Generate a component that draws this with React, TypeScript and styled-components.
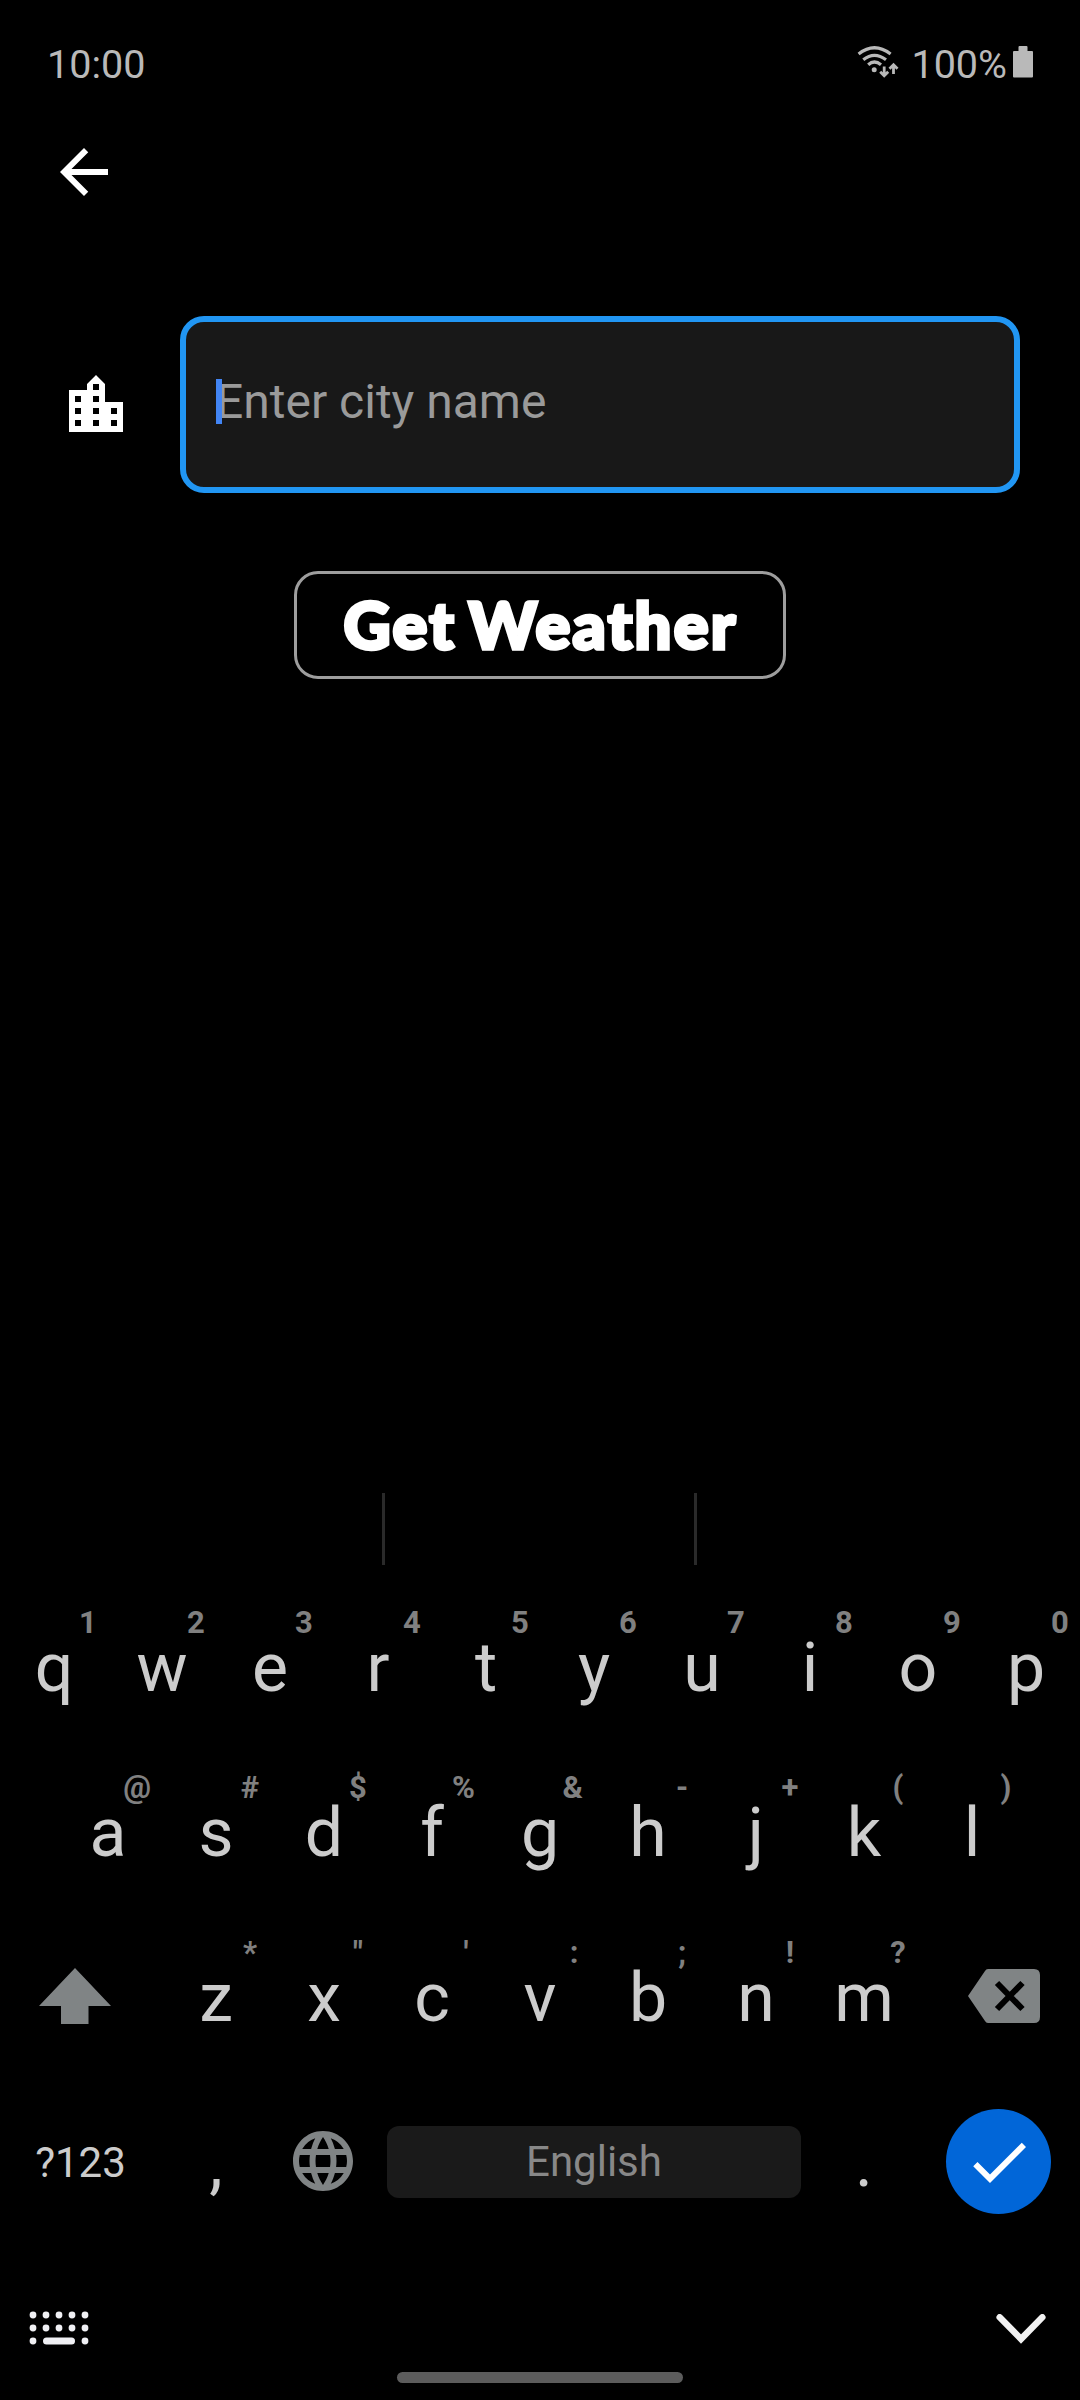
import React from "react";
import styled, { createGlobalStyle } from "styled-components";
import { MdArrowBack, MdCheck, MdLanguage, MdLocationCity } from "react-icons/md";

const GlobalStyle = createGlobalStyle`
  * { box-sizing: border-box; }
  body { margin: 0; background: #000; font-family: Roboto, "Liberation Sans", sans-serif; }
  svg { display: block; flex: none; }
`;

const Screen = styled.main`
  width: 1080px;
  height: 2400px;
  display: flex;
  flex-direction: column;
  background: #000;
  overflow: hidden;
`;

const StatusBar = styled.header`
  height: 128px;
  flex: none;
  display: flex;
  justify-content: space-between;
  padding: 41px 47px 0 47px;
  font-size: 39.5px;
  line-height: 48px;
  color: #b9b9b9;
`;

const StatusGroup = styled.div`
  display: flex;
  height: 48px;
`;

const WifiSlot = styled.span`
  padding: 3px 12px 0 0;
`;

const BatterySlot = styled.span`
  padding: 5px 0 0 6px;
`;

const AppBar = styled.nav`
  height: 188px;
  flex: none;
  padding: 8px 48px;
  color: #fff;
`;

const FieldRow = styled.section`
  display: flex;
  align-items: center;
  gap: 48px;
  flex: none;
  height: 177px;
  padding: 0 60px;
  color: #fff;
`;

const CityField = styled.div`
  position: relative;
  flex: 1;
  height: 177px;
  border: 6px solid #2196f3;
  border-radius: 24px;
  background: #181818;
  padding: 51px 30px 0;
  font-size: 48px;
  line-height: 58px;
  color: #9a9a9a;
`;

const Caret = styled.i`
  position: absolute;
  left: 30px;
  top: 57px;
  width: 6px;
  height: 45px;
  background: #4285f4;
`;

const Actions = styled.section`
  flex: 1;
  display: flex;
  justify-content: center;
  align-items: flex-start;
  padding-top: 78px;
`;

const WeatherButton = styled.button`
  width: 492px;
  height: 108px;
  padding: 0 0 2px 1px;
  border: 3px solid #9e9e9e;
  border-radius: 24px;
  background: #000;
  color: #fff;
  font-family: Lato, "Liberation Sans", sans-serif;
  font-size: 65px;
  font-weight: 900;
  line-height: 96px;
  letter-spacing: 2.3px;
  word-spacing: -5px;
  white-space: nowrap;
  -webkit-text-stroke: 3.5px #fff;
`;

const Keyboard = styled.section`
  flex: none;
  height: 770px;
  display: flex;
  flex-direction: column;
`;

const Suggestions = styled.div`
  flex: none;
  height: 110px;
  display: grid;
  grid-template-columns: 385px 312px 1fr;
  padding: 19px 0;
`;

const Suggestion = styled.div<{ $divided?: boolean }>`
  border-right: ${(p) => (p.$divided ? "3px solid #2a2a2a" : "none")};
`;

const KeyRow = styled.div`
  flex: none;
  height: 165px;
  display: flex;
  justify-content: center;
`;

const Key = styled.button<{ $width?: number }>`
  position: relative;
  width: ${(p) => p.$width ?? 108}px;
  height: 165px;
  padding: 0;
  border: 0;
  background: none;
  display: flex;
  align-items: center;
  justify-content: center;
  font-family: inherit;
  color: #cccccc;
`;

const Letter = styled.span`
  font-size: 68px;
  line-height: 80px;
  padding-top: 3px;
`;

const Hint = styled.span`
  position: absolute;
  right: 11px;
  top: 21px;
  min-width: 18px;
  text-align: center;
  font-size: 31px;
  line-height: 36px;
  font-weight: 700;
  color: #808080;
`;

const ModeLabel = styled.span`
  font-size: 42px;
  line-height: 50px;
  padding: 3px 1px 0 0;
`;

const IconKey = styled(Key)<{ $nudge?: number }>`
  padding: 0 ${(p) => p.$nudge ?? 0}px 1px 0;
  color: #808485;
`;

const SpaceKey = styled.button`
  width: 414px;
  height: 72px;
  margin: 47px 9px 0;
  padding: 0 0 1px;
  border: 0;
  border-radius: 12px;
  background: #1a1a1a;
  color: #888888;
  font: 42px/50px Roboto, "Liberation Sans", sans-serif;
`;

const DoneKey = styled.button`
  width: 105px;
  height: 105px;
  margin: 30px 29px 0 28px;
  padding: 0;
  border: 0;
  border-radius: 50%;
  background: #0166d8;
  color: #fff;
  display: flex;
  align-items: center;
  justify-content: center;
`;

const NavBar = styled.footer`
  flex: none;
  height: 156px;
  display: grid;
  grid-template-columns: 368px 286px 1fr;
  align-items: start;
  padding: 67px 34px 0 29px;
`;

const ChevronSlot = styled.span`
  justify-self: end;
  padding-top: 3px;
`;

const HomePill = styled.span`
  height: 11px;
  margin-top: 61px;
  border-radius: 6px;
  background: #5c5c5c;
`;

const WifiIcon = () => (
  <svg width="42" height="34" viewBox="0 0 42 34" fill="none" stroke="#b9b9b9">
    <path d="M1.600 10Q17.300-2.500 33.600 10" strokeWidth="3.200" />
    <path d="M6.300 15.800Q17.300 7 29 15.800" strokeWidth="3.200" />
    <path d="M11.200 20.800Q17.300 15.200 24 20.800" strokeWidth="3.200" />
    <circle cx="17.200" cy="25.700" r="2.500" fill="#b9b9b9" stroke="none" />
    <path
      d="M27.200 22.500v9M23.200 27.800l4 4 4-4M36.500 30v-9M32.500 24.700l4-4 4 4"
      strokeWidth="2.800"
    />
  </svg>
);

const BatteryIcon = () => (
  <svg width="20" height="32" viewBox="0 0 20 32" fill="#b9b9b9">
    <path d="M6.500 0h7q1 0 1 1v4H19q1 0 1 1v24.500q0 1-1 1H1q-1 0-1-1V6q0-1 1-1h4.500V1q0-1 1-1z" />
  </svg>
);

const ShiftIcon = () => (
  <svg width="72" height="56" viewBox="0 0 72 56" fill="currentColor">
    <path d="M36 0L72 38H49.500V56H22V38H0z" />
  </svg>
);

const BackspaceIcon = () => (
  <svg width="72" height="54" viewBox="0 0 72 54">
    <path d="M20 0H66q6 0 6 6V48q0 6-6 6H20q-2 0-3-2L0 27 17 2q1-2 3-2z" fill="currentColor" />
    <path d="M29 14L54.500 40M54.500 14L29 40" stroke="#000" strokeWidth="6" />
  </svg>
);

const KeyboardIcon = () => (
  <svg width="60" height="34" viewBox="0 0 60 34" fill="#f0f0f4">
    {[4, 17, 30, 43, 56].map((x) => (
      <React.Fragment key={x}>
        <circle cx={x} cy="4" r="3.400" />
        <circle cx={x} cy="17" r="3.400" />
      </React.Fragment>
    ))}
    <circle cx="4" cy="30" r="3.400" />
    <circle cx="56" cy="30" r="3.400" />
    <rect x="14" y="26.500" width="32" height="7" rx="3.500" />
  </svg>
);

const ChevronIcon = () => (
  <svg width="50" height="34" viewBox="0 0 50 34" fill="none">
    <path d="M3.700 3.300L25 25 46.300 3.300" stroke="#f2f2f2" strokeWidth="6.500" strokeLinecap="round" />
  </svg>
);

const topRow = { letters: "qwertyuiop", hints: "1234567890" };
const homeRow = { letters: "asdfghjkl", hints: "@#$%&-+()" };
const bottomRow = { letters: "zxcvbnm", hints: "*\"':;!?" };

const LetterKeys = ({ letters, hints }: { letters: string; hints: string }) => (
  <>
    {[...letters].map((letter, i) => (
      <Key key={letter}>
        <Letter>{letter}</Letter>
        <Hint>{hints[i]}</Hint>
      </Key>
    ))}
  </>
);

export default function App() {
  return (
    <Screen>
      <GlobalStyle />
      <StatusBar>
        <span>10:00</span>
        <StatusGroup>
          <WifiSlot><WifiIcon /></WifiSlot>
          <span>100%</span>
          <BatterySlot><BatteryIcon /></BatterySlot>
        </StatusGroup>
      </StatusBar>
      <AppBar><MdArrowBack size={72} /></AppBar>
      <FieldRow>
        <MdLocationCity size={72} />
        <CityField>
          <Caret />
          Enter city name
        </CityField>
      </FieldRow>
      <Actions><WeatherButton>Get Weather</WeatherButton></Actions>
      <Keyboard>
        <Suggestions>
          <Suggestion $divided />
          <Suggestion $divided />
          <Suggestion />
        </Suggestions>
        <KeyRow><LetterKeys {...topRow} /></KeyRow>
        <KeyRow><LetterKeys {...homeRow} /></KeyRow>
        <KeyRow>
          <IconKey $width={150}><ShiftIcon /></IconKey>
          <Key as="span" $width={12} />
          <LetterKeys {...bottomRow} />
          <Key as="span" $width={12} />
          <IconKey $width={150} $nudge={2}><BackspaceIcon /></IconKey>
        </KeyRow>
        <KeyRow>
          <Key $width={162}><ModeLabel>?123</ModeLabel></Key>
          <Key><Letter>,</Letter></Key>
          <IconKey $nudge={2}><MdLanguage size={72} /></IconKey>
          <SpaceKey>English</SpaceKey>
          <Key><Letter>.</Letter></Key>
          <DoneKey><MdCheck size={72} /></DoneKey>
        </KeyRow>
      </Keyboard>
      <NavBar>
        <KeyboardIcon />
        <HomePill />
        <ChevronSlot><ChevronIcon /></ChevronSlot>
      </NavBar>
    </Screen>
  );
}
